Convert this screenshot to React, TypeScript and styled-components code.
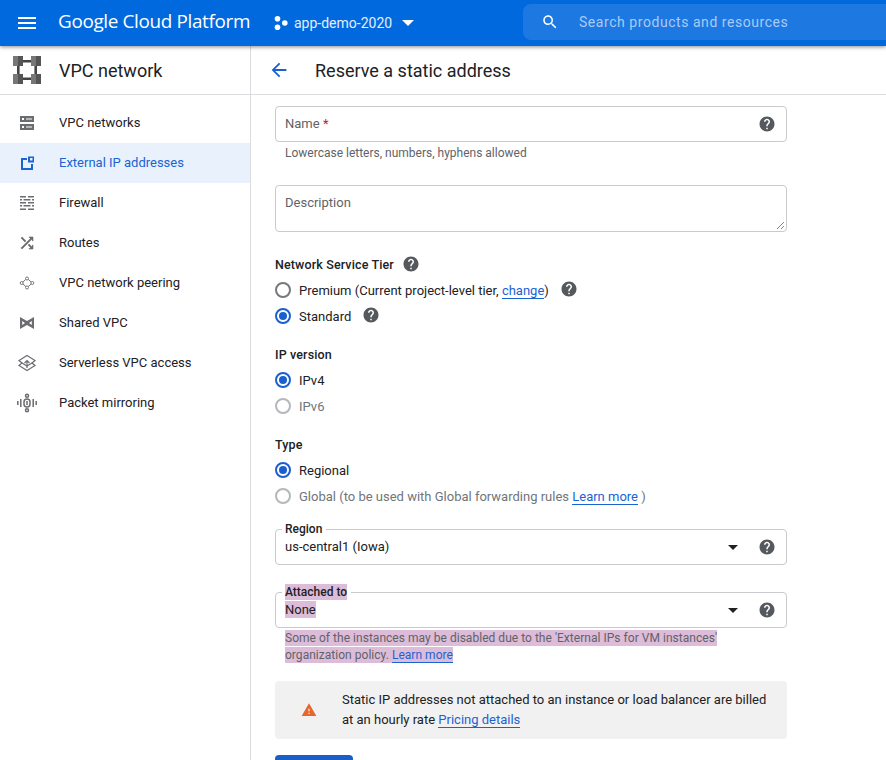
import React from "react";
import styled, { createGlobalStyle } from "styled-components";

const GlobalStyle = createGlobalStyle`
  html, body {
    margin: 0;
    height: 100%;
    overflow: hidden;
    background: #fff;
    font-family: Roboto, "Liberation Sans", sans-serif;
    color: #202124;
  }
  * { box-sizing: border-box; }
`;

const Page = styled.div`
  width: 886px;
  height: 760px;
  display: flex;
  flex-direction: column;
  overflow: hidden;
`;

const TopBar = styled.header`
  flex: 0 0 46px;
  height: 46px;
  background: #0169de;
  display: flex;
  align-items: center;
  color: #fff;
  position: relative;
  z-index: 2;
  box-shadow: 0 1px 4px rgba(0, 0, 0, 0.45);
`;

const Burger = styled.svg`
  width: 24px;
  height: 24px;
  margin-left: 15px;
  fill: #fff;
`;

const Brand = styled.div`
  margin-left: 19px;
  width: 197px;
  font-family: "Open Sans", Roboto, sans-serif;
  font-size: 18.9px;
  letter-spacing: -0.35px;
  white-space: nowrap;
  position: relative;
  top: -2px;
`;

const ProjectPicker = styled.div`
  margin-left: 19px;
  display: flex;
  align-items: center;
  font-size: 14px;
  color: #e3eefb;
  width: 250px;
  flex: none;
`;

const ProjectDots = styled.svg`
  width: 14px;
  height: 14px;
  margin-right: 6px;
  fill: #fff;
`;

const Caret = styled.div<{ $color?: string }>`
  width: 0;
  height: 0;
  border-left: 6px solid transparent;
  border-right: 6px solid transparent;
  border-top: 6px solid ${(p) => p.$color || "#fff"};
`;

const ProjectCaret = styled(Caret)`
  margin-left: 10px;
`;

const SearchBox = styled.div`
  position: absolute;
  left: 523px;
  right: 0;
  top: 4px;
  height: 36px;
  background: #1e78e2;
  border-radius: 8px 0 0 8px;
  display: flex;
  align-items: center;
  padding-left: 18px;
  font-size: 14px;
  letter-spacing: 0.55px;
  color: #a9cbf5;
`;

const SearchIcon = styled.svg`
  width: 18px;
  height: 18px;
  fill: #fff;
  margin-right: 20px;
`;

const Body = styled.div`
  flex: 1;
  display: flex;
  min-height: 0;
`;

const Sidebar = styled.aside`
  flex: 0 0 251px;
  border-right: 1px solid #dadce0;
  display: flex;
  flex-direction: column;
`;

const SideHeader = styled.div`
  height: 49px;
  flex: none;
  border-bottom: 1px solid #dadce0;
  display: flex;
  align-items: center;
  padding-left: 13px;
  font-size: 18px;
  color: #202124;
`;

const Logo = styled.svg`
  width: 28px;
  height: 28px;
  margin-right: 18px;
`;

const NavList = styled.nav`
  padding-top: 8px;
  display: flex;
  flex-direction: column;
`;

const NavItem = styled.div<{ $active?: boolean }>`
  height: 40px;
  display: flex;
  align-items: center;
  padding-left: 18px;
  font-size: 13px;
  color: ${(p) => (p.$active ? "#1a63d3" : "#202124")};
  background: ${(p) => (p.$active ? "#e9f1fc" : "transparent")};
`;

const NavLabel = styled.span`
  margin-top: -2px;
`;

const NavIcon = styled.svg<{ $active?: boolean }>`
  width: 18px;
  height: 18px;
  margin-right: 23px;
  flex: none;
  fill: ${(p) => (p.$active ? "#1a63d3" : "#6b6d70")};
  overflow: visible;
`;

const Main = styled.main`
  flex: 1;
  display: flex;
  flex-direction: column;
  min-width: 0;
`;

const MainHeader = styled.div`
  height: 49px;
  flex: none;
  border-bottom: 1px solid #dadce0;
  display: flex;
  align-items: center;
  padding-left: 17px;
  font-size: 18px;
  color: #202124;
`;

const BackArrow = styled.svg`
  width: 22px;
  height: 22px;
  fill: #1a5fd0;
  margin-right: 25px;
`;

const Form = styled.div`
  padding: 11px 0 0 24px;
  width: 536px;
  font-size: 13px;
`;

const TextField = styled.div<{ $tall?: boolean }>`
  height: ${(p) => (p.$tall ? "47px" : "36px")};
  margin-top: ${(p) => (p.$tall ? "23px" : "0")};
  border: 1px solid #c8cacd;
  border-radius: 4px;
  display: flex;
  align-items: ${(p) => (p.$tall ? "flex-start" : "center")};
  justify-content: space-between;
  padding: ${(p) => (p.$tall ? "9px 9px 0" : "0 10px 0 9px")};
  color: #5f6368;
  position: relative;
`;

const FieldText = styled.span`
  margin-top: -2px;
`;

const Required = styled.span`
  color: #c5221f;
`;

const ResizeGrip = styled.svg`
  position: absolute;
  right: 1px;
  bottom: 1px;
  width: 9px;
  height: 9px;
  stroke: #80868b;
  stroke-width: 1;
  fill: none;
`;

const Hint = styled.div`
  padding-left: 10px;
  margin-top: 3px;
  font-size: 12px;
  line-height: 17px;
  color: #5f6368;
`;

const HelpIcon = styled.svg`
  width: 18px;
  height: 18px;
  fill: #55585c;
  flex: none;
`;

const SectionLabel = styled.div<{ $top: number }>`
  margin-top: ${(p) => p.$top}px;
  height: 20px;
  display: flex;
  align-items: center;
  font-weight: 500;
  font-size: 12.5px;
  letter-spacing: 0.13px;
  gap: 8px;
`;

const RadioRow = styled.div<{ $disabled?: boolean; $first?: boolean }>`
  height: 26px;
  margin-top: ${(p) => (p.$first ? "3px" : "0")};
  display: flex;
  align-items: center;
  color: ${(p) => (p.$disabled ? "#70757a" : "#202124")};
`;

const RadioCircle = styled.span<{ $checked?: boolean; $disabled?: boolean }>`
  width: 16px;
  height: 16px;
  border-radius: 50%;
  flex: none;
  margin-right: 8px;
  border: 2px solid
    ${(p) => (p.$checked ? "#1a5fd0" : p.$disabled ? "#b5b7ba" : "#75787c")};
  display: flex;
  align-items: center;
  justify-content: center;
  &::after {
    content: "";
    width: 8px;
    height: 8px;
    border-radius: 50%;
    background: ${(p) => (p.$checked ? "#1a5fd0" : "transparent")};
  }
`;

const RowHelp = styled(HelpIcon)`
  margin-left: 11px;
  position: relative;
  top: -1px;
`;

const TextLink = styled.a`
  color: #1a63d3;
  border-bottom: 1px solid #1a63d3;
  line-height: 15px;
`;

const SelectField = styled.div<{ $top: number }>`
  margin-top: ${(p) => p.$top}px;
  height: 36px;
  border: 1px solid #c8cacd;
  border-radius: 4px;
  display: flex;
  align-items: center;
  padding: 0 10px 0 9px;
  position: relative;
  font-size: 13px;
`;

const SelectLegend = styled.div`
  position: absolute;
  left: 6px;
  top: -8px;
  padding: 0 4px 0 3px;
  background: #fff;
  font-size: 12px;
  line-height: 14px;
  font-weight: 500;
  color: #202124;
`;

const SelectValue = styled.div`
  flex: 1;
  margin-top: -2px;
`;

const SelectCaret = styled(Caret)`
  margin-right: 20px;
  border-left-width: 5.5px;
  border-right-width: 5.5px;
  border-top-width: 5px;
`;

const Marked = styled.span`
  background: #dcbcd8;
  padding: 1px 0;
`;

const MarkedBlock = styled.div`
  padding-left: 10px;
  margin-top: 2px;
  font-size: 12px;
  line-height: 17px;
  letter-spacing: 0.03px;
  color: #5f6368;
`;

const Callout = styled.div`
  margin-top: 17px;
  height: 58px;
  background: #f1f1f1;
  border-radius: 4px;
  display: flex;
  align-items: center;
  padding: 0 12px 0 26px;
  line-height: 20px;
  font-size: 13px;
  white-space: nowrap;
`;

const WarnIcon = styled.svg`
  width: 16px;
  height: 16px;
  flex: none;
  fill: #e8662c;
  margin-right: 25px;
`;

const SubmitButton = styled.div`
  margin-top: 16px;
  width: 78px;
  height: 36px;
  border-radius: 4px;
  background: #1a5fc8;
`;

const HELP =
  "M12 2C6.48 2 2 6.48 2 12s4.48 10 10 10 10-4.48 10-10S17.52 2 12 2zm1 17h-2v-2h2v2zm2.07-7.75l-.9.92C13.45 12.9 13 13.5 13 15h-2v-.5c0-1.1.45-2.1 1.17-2.83l1.24-1.26c.37-.36.59-.86.59-1.41 0-1.1-.9-2-2-2s-2 .9-2 2H8c0-2.21 1.79-4 4-4s4 1.79 4 4c0 .88-.36 1.68-.93 2.25z";

const Help = () => (
  <HelpIcon viewBox="0 0 24 24">
    <path d={HELP} />
  </HelpIcon>
);

const InlineHelp = () => (
  <RowHelp viewBox="0 0 24 24">
    <path d={HELP} />
  </RowHelp>
);

const navItems: { label: string; active?: boolean; icon: React.ReactNode }[] = [
  {
    label: "VPC networks",
    icon: (
      <path
        fillRule="evenodd"
        d="M2 2h14v6H2zM2 10h14v6H2zM4 4v2h2V4zM4 12v2h2v-2zM8 4.500v1h6v-1zM8 12.500v1h6v-1z"
      />
    ),
  },
  {
    label: "External IP addresses",
    active: true,
    icon: (
      <path
        fillRule="evenodd"
        d="M3 4h6v2H5v8h8V10h2v6H3zM10 2.500h6v6h-6zM12 4v2.500h2.500V4z"
      />
    ),
  },
  {
    label: "Firewall",
    icon: (
      <path d="M2 2h6v1.500H2zM10 2h6v1.500h-6zM2 5h2v1.500H2zM5.500 5h7v1.500h-7zM14 5h2v1.500h-2zM2 8h6v1.500H2zM10 8h6v1.500h-6zM2 11h2v1.500H2zM5.500 11h7v1.500h-7zM14 11h2v1.500h-2zM2 14.500h6V16H2zM10 14.500h6V16h-6z" />
    ),
  },
  {
    label: "Routes",
    icon: (
      <g transform="scale(0.75)" stroke="#6b6d70" strokeWidth="0.8">
        <path d="M10.590 9.170 5.410 4 4 5.410l5.170 5.170 1.420-1.410zM14.500 4l2.040 2.040L4 18.590 5.410 20 17.960 7.460 20 9.500V4h-5.500zm.33 9.410-1.410 1.410 3.130 3.130L14.500 20H20v-5.500l-2.040 2.040-3.130-3.130z" />
      </g>
    ),
  },
  {
    label: "VPC network peering",
    icon: (
      <g fill="none" stroke="#77797c" strokeWidth="1">
        <circle cx="3.700" cy="9" r="1.500" />
        <circle cx="14.300" cy="9" r="1.500" />
        <circle cx="9" cy="4.500" r="1.500" />
        <circle cx="9" cy="13.500" r="1.500" />
        <path d="M4.800 8 7.800 5.400M10.200 5.400l3 2.600M13.200 10l-3 2.600M7.800 12.600 4.800 10" />
      </g>
    ),
  },
  {
    label: "Shared VPC",
    icon: (
      <path
        fillRule="evenodd"
        d="M2 3 9 7l7-4v12l-7-4-7 4zM4.200 7v4L7 9zM13.800 7 11 9l2.800 2z"
      />
    ),
  },
  {
    label: "Serverless VPC access",
    icon: (
      <g fill="none" stroke="#6b6d70" strokeWidth="1.200">
        <path d="M9 1.500 17 6.500 14 9l3 2.500-8 5-8-5L4 9 1 6.500z" />
        <path d="M4 9 9 12l5-3" />
        <path d="M9 14V7M6.500 9 9 6.500 11.500 9" />
      </g>
    ),
  },
  {
    label: "Packet mirroring",
    icon: (
      <g fill="none" stroke="#6b6d70" strokeWidth="1.500">
        <circle cx="9" cy="1.800" r="1.500" />
        <circle cx="9" cy="16.200" r="1.500" />
        <rect x="6" y="5" width="6" height="8" rx="3" />
        <path d="M-.2 7v4M2.800 5v8M15.200 5v8M18.200 7v4M9 7v4" />
      </g>
    ),
  },
];

export default function App() {
  return (
    <Page>
      <GlobalStyle />
      <TopBar>
        <Burger viewBox="0 0 24 24">
          <path d="M3 18h18v-2H3v2zm0-5h18v-2H3v2zm0-7v2h18V6H3z" />
        </Burger>
        <Brand>Google Cloud Platform</Brand>
        <ProjectPicker>
          <ProjectDots viewBox="0 0 14 14">
            <circle cx="3.500" cy="2.800" r="2.800" />
            <circle cx="3.500" cy="11.200" r="2.800" />
            <circle cx="10.800" cy="7" r="2.800" />
          </ProjectDots>
          app-demo-2020
          <ProjectCaret />
        </ProjectPicker>
        <SearchBox>
          <SearchIcon viewBox="0 0 24 24">
            <path d="M15.500 14h-.79l-.28-.27C15.410 12.590 16 11.110 16 9.500 16 5.910 13.090 3 9.500 3S3 5.910 3 9.500 5.910 16 9.500 16c1.610 0 3.090-.59 4.230-1.570l.27.28v.79l5 4.990L20.490 19l-4.990-5zm-6 0C7.010 14 5 11.990 5 9.500S7.010 5 9.500 5 14 7.010 14 9.500 11.990 14 9.500 14z" />
          </SearchIcon>
          Search products and resources
        </SearchBox>
      </TopBar>
      <Body>
        <Sidebar>
          <SideHeader>
            <Logo viewBox="0 0 28 28">
              <path fill="#444" d="M10 4h8v2.600h-8zM10 21.400h8V24h-8zM4 10h2.600v8H4zM21.400 10H24v8h-2.600z" />
              <path fill="#777" d="M0 0h5v10H0zM18 0h5v10h-5zM0 18h5v10H0zM18 18h5v10h-5z" />
              <path fill="#555" d="M5 0h5v10H5zM23 0h5v10h-5zM5 18h5v10H5zM23 18h5v10h-5z" />
            </Logo>
            VPC network
          </SideHeader>
          <NavList>
            {navItems.map((item) => (
              <NavItem key={item.label} $active={item.active}>
                <NavIcon viewBox="0 0 18 18" $active={item.active}>
                  {item.icon}
                </NavIcon>
                <NavLabel>{item.label}</NavLabel>
              </NavItem>
            ))}
          </NavList>
        </Sidebar>
        <Main>
          <MainHeader>
            <BackArrow viewBox="0 0 24 24">
              <path d="M20 11H7.830l5.590-5.590L12 4l-8 8 8 8 1.410-1.410L7.830 13H20v-2z" />
            </BackArrow>
            Reserve a static address
          </MainHeader>
          <Form>
            <TextField>
              <FieldText>
                Name <Required>*</Required>
              </FieldText>
              <Help />
            </TextField>
            <Hint>Lowercase letters, numbers, hyphens allowed</Hint>
            <TextField $tall>
              Description
              <ResizeGrip viewBox="0 0 9 9">
                <path d="M8 1 1 8M8 5 5 8" />
              </ResizeGrip>
            </TextField>

            <SectionLabel $top={22}>
              Network Service Tier
              <Help />
            </SectionLabel>
            <RadioRow $first>
              <RadioCircle />
              <span>
                Premium (Current project-level tier, <TextLink>change</TextLink>)
              </span>
              <InlineHelp />
            </RadioRow>
            <RadioRow>
              <RadioCircle $checked />
              Standard
              <InlineHelp />
            </RadioRow>

            <SectionLabel $top={15}>IP version</SectionLabel>
            <RadioRow $first>
              <RadioCircle $checked />
              IPv4
            </RadioRow>
            <RadioRow $disabled>
              <RadioCircle $disabled />
              IPv6
            </RadioRow>

            <SectionLabel $top={15}>Type</SectionLabel>
            <RadioRow $first>
              <RadioCircle $checked />
              Regional
            </RadioRow>
            <RadioRow $disabled>
              <RadioCircle $disabled />
              <span>
                Global (to be used with Global forwarding rules{" "}
                <TextLink>Learn more</TextLink> )
              </span>
            </RadioRow>

            <SelectField $top={20}>
              <SelectLegend>Region</SelectLegend>
              <SelectValue>us-central1 (Iowa)</SelectValue>
              <SelectCaret $color="#202124" />
              <Help />
            </SelectField>

            <SelectField $top={27}>
              <SelectLegend>
                <Marked>Attached to</Marked>
              </SelectLegend>
              <SelectValue>
                <Marked>None</Marked>
              </SelectValue>
              <SelectCaret $color="#202124" />
              <Help />
            </SelectField>
            <MarkedBlock>
              <Marked>
                Some of the instances may be disabled due to the 'External IPs for VM instances'
              </Marked>
              <br />
              <Marked>
                organization policy. <TextLink>Learn more</TextLink>
              </Marked>
            </MarkedBlock>

            <Callout>
              <WarnIcon viewBox="0 0 24 24">
                <path d="M1 21h22L12 2 1 21zm12-3h-2v-2h2v2zm0-4h-2v-4h2v4z" />
              </WarnIcon>
              <div>
                Static IP addresses not attached to an instance or load balancer are billed
                <br />
                at an hourly rate <TextLink>Pricing details</TextLink>
              </div>
            </Callout>
            <SubmitButton />
          </Form>
        </Main>
      </Body>
    </Page>
  );
}
